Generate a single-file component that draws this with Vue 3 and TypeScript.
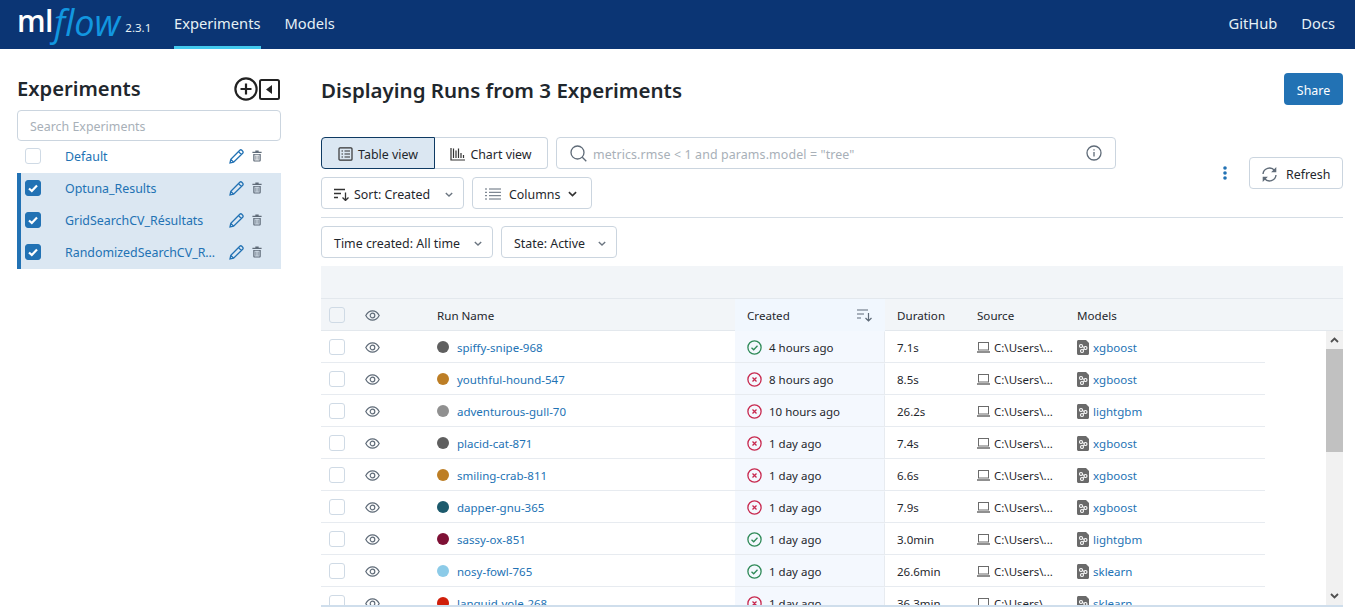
<script setup lang="ts">
interface Exp { name: string; on: boolean }
interface Run { name: string; color: string; ok: boolean; created: string; dur: string; model: string }
const exps: Exp[] = [
  { name: 'Default', on: false },
  { name: 'Optuna_Results', on: true },
  { name: 'GridSearchCV_Résultats', on: true },
  { name: 'RandomizedSearchCV_Résultats', on: true },
]
const runs: Run[] = [
  { name: 'spiffy-snipe-968', color: '#5f5f5f', ok: true, created: '4 hours ago', dur: '7.1s', model: 'xgboost' },
  { name: 'youthful-hound-547', color: '#bd7e25', ok: false, created: '8 hours ago', dur: '8.5s', model: 'xgboost' },
  { name: 'adventurous-gull-70', color: '#909090', ok: false, created: '10 hours ago', dur: '26.2s', model: 'lightgbm' },
  { name: 'placid-cat-871', color: '#5f5f5f', ok: false, created: '1 day ago', dur: '7.4s', model: 'xgboost' },
  { name: 'smiling-crab-811', color: '#bd7e25', ok: false, created: '1 day ago', dur: '6.6s', model: 'xgboost' },
  { name: 'dapper-gnu-365', color: '#1c5a6c', ok: false, created: '1 day ago', dur: '7.9s', model: 'xgboost' },
  { name: 'sassy-ox-851', color: '#7e1035', ok: true, created: '1 day ago', dur: '3.0min', model: 'lightgbm' },
  { name: 'nosy-fowl-765', color: '#8ccbe8', ok: true, created: '1 day ago', dur: '26.6min', model: 'sklearn' },
  { name: 'languid-vole-268', color: '#d01f0b', ok: false, created: '1 day ago', dur: '36.3min', model: 'sklearn' },
]
</script>

<template>
  <div class="page">
    <header class="nav">
      <div class="brand">
        <span class="ml">ml</span><span class="flow">flow</span><span class="ver">2.3.1</span>
      </div>
      <a class="tab active">Experiments</a>
      <a class="tab">Models</a>
      <div class="nav-right">
        <a class="ext">GitHub</a>
        <a class="ext">Docs</a>
      </div>
    </header>

    <div class="body">
      <aside class="side">
        <div class="side-head">
          <h2>Experiments</h2>
          <div class="side-icons">
            <svg width="24" height="24" viewBox="0 0 24 24" fill="none" stroke="#222" stroke-width="2.2"><circle cx="12" cy="12" r="10.6"/><path d="M12 6.5v11M6.5 12h11"/></svg>
            <svg width="21" height="21" viewBox="0 0 21 21"><rect x="1" y="1" width="19" height="19" rx="1.5" fill="none" stroke="#222" stroke-width="2"/><path d="M13 6v9l-6-4.500z" fill="#222"/></svg>
          </div>
        </div>
        <div class="side-search">Search Experiments</div>
        <ul class="exp-list">
          <li v-for="e in exps" :key="e.name" class="exp" :class="{ on: e.on }">
            <span class="cb" :class="{ checked: e.on }">
              <svg v-if="e.on" width="12" height="12" viewBox="0 0 12 12" fill="none" stroke="#fff" stroke-width="2.200"><path d="M2 6.500l2.800 2.500L10 3.500"/></svg>
            </span>
            <span class="exp-name">{{ e.name }}</span>
            <svg class="pencil" width="15" height="15" viewBox="0 0 15 15" fill="none" stroke="#2272b4" stroke-width="1.300"><path d="M1 14l.8-3.600L10.800 1.300c.6-.6 1.400-.6 2 0l.9.9c.6.6.6 1.400 0 2L4.600 13.200zM1.800 10.400l2.800 2.800M9.500 2.600l2.900 2.900"/></svg>
            <svg class="trash" width="10" height="12" viewBox="0 0 12 13" fill="#5f6b78"><path d="M4 0h4v1.500h3.500v1.500H.5V1.500H4zM1.500 4h9v7.500c0 .8-.6 1.500-1.500 1.500H3c-.9 0-1.500-.7-1.500-1.500zm1.500 1v7h6V5zm1.200 1h1v5h-1zm2.600 0h1v5h-1z"/></svg>
          </li>
        </ul>
      </aside>

      <main class="main">
        <div class="title-row">
          <h1>Displaying Runs from 3 Experiments</h1>
          <button class="share">Share</button>
        </div>

        <div class="controls">
          <div class="controls-left">
            <div class="line">
              <div class="seg">
                <button class="seg-btn sel">
                  <svg width="15" height="14" viewBox="0 0 15 14" fill="none" stroke="#333" stroke-width="1.200"><rect x="1" y=".8" width="13" height="12.400" rx="1"/><path d="M3.500 4h1.500M3.500 7h1.500M3.500 10h1.500M6.500 4h5.500M6.500 7h5.500M6.500 10h5.500"/></svg>
                  Table view
                </button>
                <button class="seg-btn">
                  <svg width="15" height="14" viewBox="0 0 15 14" fill="none" stroke="#333" stroke-width="1.200"><path d="M1 1v12h14M3.500 1.500V11M6 3.500V11M8.500 1.500V11M11 6V11M13.500 8v3"/></svg>
                  Chart view
                </button>
              </div>
              <div class="search">
                <svg width="17" height="17" viewBox="0 0 17 17" fill="none" stroke="#5f6b78" stroke-width="1.300"><circle cx="7.500" cy="7.500" r="6.500"/><path d="M12.300 12.300l4 4"/></svg>
                <span class="ph">metrics.rmse &lt; 1 and params.model = "tree"</span>
                <svg class="info" width="16" height="16" viewBox="0 0 16 16" fill="none" stroke="#5f6b78" stroke-width="1.300"><circle cx="8" cy="8" r="7"/><path d="M8 7v4.500M8 4.200v1.400"/></svg>
              </div>
            </div>
            <div class="line">
              <button class="btn sort">
                <svg width="16" height="13" viewBox="0 0 16 13" fill="none" stroke="#333" stroke-width="1.300"><path d="M0 1.500h11M0 5.500h7M0 9.500h4M11.500 4.500v8M8.500 9.500l3 3 3-3"/></svg>
                Sort: Created
                <svg class="chev" width="8" height="5" viewBox="0 0 10 6" fill="none" stroke="#6b7580" stroke-width="1.700"><path d="M1 1l4 3.800L9 1"/></svg>
              </button>
              <button class="btn cols">
                <svg width="16" height="12" viewBox="0 0 16 12" fill="none" stroke="#5f6b78" stroke-width="1"><path d="M0 1h2M0 4.300h2M0 7.700h2M0 11h2M4 1h12M4 4.300h12M4 7.700h12M4 11h12"/></svg>
                Columns
                <svg width="9" height="6" viewBox="0 0 10 6" fill="none" stroke="#333" stroke-width="1.800"><path d="M1 1l4 3.800L9 1"/></svg>
              </button>
            </div>
          </div>
          <div class="controls-right">
            <svg width="4" height="14" viewBox="0 0 4 14" fill="#2272b4"><circle cx="2" cy="2" r="1.800"/><circle cx="2" cy="7" r="1.800"/><circle cx="2" cy="12" r="1.800"/></svg>
            <button class="btn refresh">
              <svg width="15" height="15" viewBox="0 0 15 15" fill="none" stroke="#5f6b78" stroke-width="1.400"><path d="M1 7a6.500 6.500 0 0 1 11.500-3.500M14 8a6.500 6.500 0 0 1-11.500 3.500"/><path d="M14.300 0v5.200H9.100zM.7 15V9.800h5.200z" fill="#5f6b78" stroke="none"/></svg>
              Refresh
            </button>
          </div>
        </div>

        <div class="filters">
          <button class="btn f1">Time created: All time
            <svg class="chev" width="8" height="5" viewBox="0 0 10 6" fill="none" stroke="#6b7580" stroke-width="1.700"><path d="M1 1l4 3.800L9 1"/></svg>
          </button>
          <button class="btn f2">State: Active
            <svg class="chev" width="8" height="5" viewBox="0 0 10 6" fill="none" stroke="#6b7580" stroke-width="1.700"><path d="M1 1l4 3.800L9 1"/></svg>
          </button>
        </div>

        <section class="table">
          <div class="band"></div>
          <div class="thead">
            <div class="row-grid">
              <div class="c c-cb"><span class="cb grey"></span></div>
              <div class="c c-eye">
                <svg class="eye" width="15" height="11" viewBox="0 0 15 11" fill="none" stroke="#5f6b78" stroke-width="1.200"><path d="M.8 5.500C2.500 2.300 4.800.8 7.500.8s5 1.500 6.700 4.700c-1.700 3.200-4 4.700-6.700 4.700S2.500 8.700.8 5.500z"/><circle cx="7.500" cy="5.500" r="2.300"/></svg>
              </div>
              <div class="c c-name dark">Run Name</div>
              <div class="c c-created hd">
                <span>Created</span>
                <svg class="sort-ic" width="16" height="13" viewBox="0 0 16 13" fill="none" stroke="#5f6b78" stroke-width="1.200"><path d="M0 1h11M0 5h7M0 9h4M11.500 4v8M8.500 9l3 3 3-3"/></svg>
              </div>
              <div class="c c-dur">Duration</div>
              <div class="c c-src">Source</div>
              <div class="c c-model dark">Models</div>
            </div>
          </div>
          <div class="tbody">
            <div class="rows">
              <div v-for="r in runs" :key="r.name" class="row-grid tr">
                <div class="c c-cb"><span class="cb"></span></div>
                <div class="c c-eye">
                  <svg class="eye" width="15" height="11" viewBox="0 0 15 11" fill="none" stroke="#5f6b78" stroke-width="1.200"><path d="M.8 5.500C2.500 2.300 4.800.8 7.500.8s5 1.500 6.700 4.700c-1.700 3.200-4 4.700-6.700 4.700S2.500 8.700.8 5.500z"/><circle cx="7.500" cy="5.500" r="2.300"/></svg>
                </div>
                <div class="c c-name">
                  <span class="dot" :style="{ background: r.color }"></span>
                  <a class="link">{{ r.name }}</a>
                </div>
                <div class="c c-created">
                  <svg v-if="r.ok" class="st" width="15" height="15" viewBox="0 0 15 15" fill="none" stroke="#2f8a58" stroke-width="1.300"><circle cx="7.500" cy="7.500" r="6.600"/><path d="M4.500 7.700l2.200 2.100 3.800-4"/></svg>
                  <svg v-else class="st" width="15" height="15" viewBox="0 0 15 15" fill="none" stroke="#c8294f" stroke-width="1.300"><circle cx="7.500" cy="7.500" r="6.600"/><path d="M5.500 5.500l4 4M9.500 5.500l-4 4"/></svg>
                  {{ r.created }}
                </div>
                <div class="c c-dur">{{ r.dur }}</div>
                <div class="c c-src">
                  <svg class="lap" width="13" height="11" viewBox="0 0 13 11" fill="none" stroke="#6b6b6b" stroke-width="1"><rect x="1.500" y=".5" width="10" height="7.500"/><path d="M0 10h13" stroke-width="1.500"/></svg>
                  C:\Users\...
                </div>
                <div class="c c-model">
                  <svg class="mod" width="12" height="15" viewBox="0 0 12 15"><path d="M1.500 0H9l3 3v10.500c0 .8-.7 1.500-1.500 1.500h-9C.7 15 0 14.300 0 13.500v-12C0 .7.700 0 1.500 0z" fill="#6a6a6a"/><path d="M4 6l4.500 2L5 11" fill="none" stroke="#fff" stroke-width="1"/><circle cx="4" cy="6" r="1.500" fill="#6a6a6a" stroke="#fff" stroke-width="1.100"/><circle cx="8.500" cy="8" r="1.500" fill="#6a6a6a" stroke="#fff" stroke-width="1.100"/><circle cx="5" cy="11" r="1.500" fill="#6a6a6a" stroke="#fff" stroke-width="1.100"/></svg>
                  <a class="link">{{ r.model }}</a>
                </div>
              </div>
            </div>
            <div class="scrollbar">
              <div class="sb-btn">
                <svg width="9" height="6" viewBox="0 0 9 6" fill="none" stroke="#505050" stroke-width="1.800"><path d="M1 5l3.500-3.500L8 5"/></svg>
              </div>
              <div class="sb-thumb"></div>
              <div class="sb-rest"></div>
              <div class="sb-btn">
                <svg width="9" height="6" viewBox="0 0 9 6" fill="none" stroke="#505050" stroke-width="1.800"><path d="M1 1l3.500 3.500L8 1"/></svg>
              </div>
            </div>
          </div>
        </section>
      </main>
    </div>
  </div>
</template>

<style>
html, body { margin: 0; height: 100%; overflow: hidden; background: #fff; }
</style>

<style scoped>
* { box-sizing: border-box; }
.page {
  width: 1355px; height: 609px; overflow: hidden; display: flex; flex-direction: column;
  font-family: "Noto Sans", "Open Sans", sans-serif; font-size: 12.4px; color: #1f272d;
}
.nav { height: 49px; flex: none; background: #0b3574; display: flex; align-items: stretch; color: #e6f1f5; }
.brand { width: 174px; padding-left: 17px; display: flex; align-items: flex-start; }
.ml { font: 600 30px/42px "Open Sans", sans-serif; color: #fff; letter-spacing: -.5px; }
.flow { font: italic 400 36px/46px "Open Sans", sans-serif; color: #1297e0; margin-left: 1px; }
.ver { font-size: 11.5px; line-height: 16px; margin-top: 20px; color: #e6f1f5; margin-left: 5px; }
.tab { font-size: 14.7px; line-height: 46px; height: 49px; border-bottom: 3px solid transparent; margin-right: 24px; }
.tab.active { border-bottom-color: #43c9ed; }
.nav-right { margin-left: auto; display: flex; gap: 24px; padding-right: 20px; }
.ext { font-size: 14.7px; line-height: 46px; }

.body { flex: 1; min-height: 0; display: flex; padding: 0 12px 2px 17px; gap: 40px; }
.side { width: 264px; flex: none; }
.side-head { height: 61px; display: flex; align-items: flex-end; justify-content: space-between; padding: 0 1px 8px 0; }
.side-head h2 { margin: 0; font-size: 20.200px; line-height: 28px; font-weight: 600; color: #1f272d; }
.side-icons { display: flex; align-items: center; gap: 1px; margin-bottom: 1px; }
.side-search {
  height: 31px; border: 1px solid #cbd5df; border-radius: 4px; padding-left: 12px;
  line-height: 31px; color: #a8b0b8;
}
.exp-list { list-style: none; margin: 0; padding: 0; }
.exp { height: 32px; display: flex; align-items: center; padding-left: 8px; padding-bottom: 2px; }
.exp.on { background: #dbe7f2; border-left: 4px solid #2272b4; padding-left: 4px; }
.cb {
  width: 16px; height: 16px; flex: none; display: flex; align-items: center; justify-content: center;
  border: 1px solid #cfdae5; border-radius: 3px; background: #fff;
}
.cb.checked { background: #2272b4; border-color: #2272b4; }
.cb.grey { background: #f2f5f8; }
.exp-name {
  width: 152px; margin-left: 24px; color: #2272b4; white-space: nowrap; overflow: hidden; text-overflow: ellipsis;
}
.pencil { margin-left: 12px; }
.trash { margin-left: 8px; }

.main { flex: 1; min-width: 0; display: flex; flex-direction: column; }
.title-row { height: 88px; flex: none; display: flex; justify-content: space-between; align-items: flex-start; padding-top: 24px; }
.title-row h1 { margin: 0; font-size: 20.500px; line-height: 34px; font-weight: 600; }
.share {
  width: 59px; height: 32px; background: #2272b4; color: #fff; border: 0; border-radius: 4px;
  font: inherit; padding: 2px 0 0;
}
.controls { height: 81px; flex: none; border-bottom: 1px solid #d5dde5; display: flex; justify-content: space-between; }
.controls-left { display: flex; flex-direction: column; gap: 8px; }
.line { display: flex; gap: 8px; }
.seg { display: flex; height: 32px; }
.seg-btn {
  height: 32px; display: flex; align-items: center; justify-content: center; gap: 5px; font: inherit; color: #1f272d;
  border: 1px solid #cbd5df; background: #fff; padding: 2px 0 0;
}
.seg-btn.sel { width: 114px; background: #dbe7f2; border-color: #0e3a63; border-radius: 4px 0 0 4px; }
.seg-btn:not(.sel) { width: 113px; border-left: 0; border-radius: 0 4px 4px 0; }
.search {
  width: 560px; height: 32px; border: 1px solid #cbd5df; border-radius: 4px; display: flex; align-items: center; padding: 0 13px;
}
.ph { margin-left: 6px; padding-top: 2px; color: #a8b0b8; letter-spacing: .12px; }
.info { margin-left: auto; }
.btn {
  height: 32px; font: inherit; color: #1f272d; background: #fff; border: 1px solid #cbd5df; border-radius: 4px;
  display: flex; align-items: center; padding: 2px 10px 0 12px; white-space: nowrap;
}
.sort { width: 143px; gap: 4px; }
.cols { width: 120px; gap: 8px; }
.chev { margin-left: auto; }
.controls-right { display: flex; align-items: flex-start; gap: 22px; padding-top: 20px; }
.controls-right > svg { margin-top: 9px; }
.refresh { width: 94px; gap: 9px; }
.filters { height: 40px; flex: none; display: flex; gap: 8px; align-items: flex-end; }
.f1 { width: 172px; }
.f2 { width: 116px; }

.table { margin-top: 8px; flex: 1; min-height: 0; display: flex; flex-direction: column; border-bottom: 2px solid #cfdeec; overflow: hidden; }
.band { height: 33px; flex: none; background: #f2f5f8; border-bottom: 1px solid #e3e8ed; }
.thead { height: 32px; flex: none; background: #f2f5f8; border-bottom: 1px solid #e3e8ed; }
.row-grid { display: grid; grid-template-columns: 40px 68px 306px 150px 80px 100px 200px; height: 32px; width: 944px; }
.c { display: flex; align-items: center; white-space: nowrap; min-width: 0; }
.c-cb { padding-left: 8px; }
.c-eye { padding-left: 4px; }
.c-name { padding-left: 8px; }
.c-created, .c-dur, .c-src, .c-model { padding-left: 12px; }
.hd { background: #f1f7fe; justify-content: space-between; padding-right: 12px; }
.thead .c { font-size: 11.600px; }
.tbody { flex: 1; min-height: 0; display: flex; justify-content: space-between; overflow: hidden; }
.rows { width: 944px; flex: none; }
.tr .c { font-size: 11.500px; border-top: 1px solid transparent; border-bottom: 1px solid #e7ebf0; }
.tr .c-created { background: #f4f8fe; border-right: 1px solid #e7ebf0; }
.dot { width: 12px; height: 12px; border-radius: 50%; margin-right: 8px; flex: none; }
.link { color: #2272b4; }
.st { margin-right: 7px; flex: none; }
.lap { margin-right: 4px; flex: none; }
.mod { margin-right: 4px; flex: none; }
.scrollbar { width: 17px; flex: none; display: flex; flex-direction: column; background: #f1f1f1; }
.sb-btn { height: 18px; flex: none; display: flex; align-items: center; justify-content: center; }
.sb-thumb { height: 103px; flex: none; background: #c1c1c1; }
.sb-rest { flex: 1; }
</style>
